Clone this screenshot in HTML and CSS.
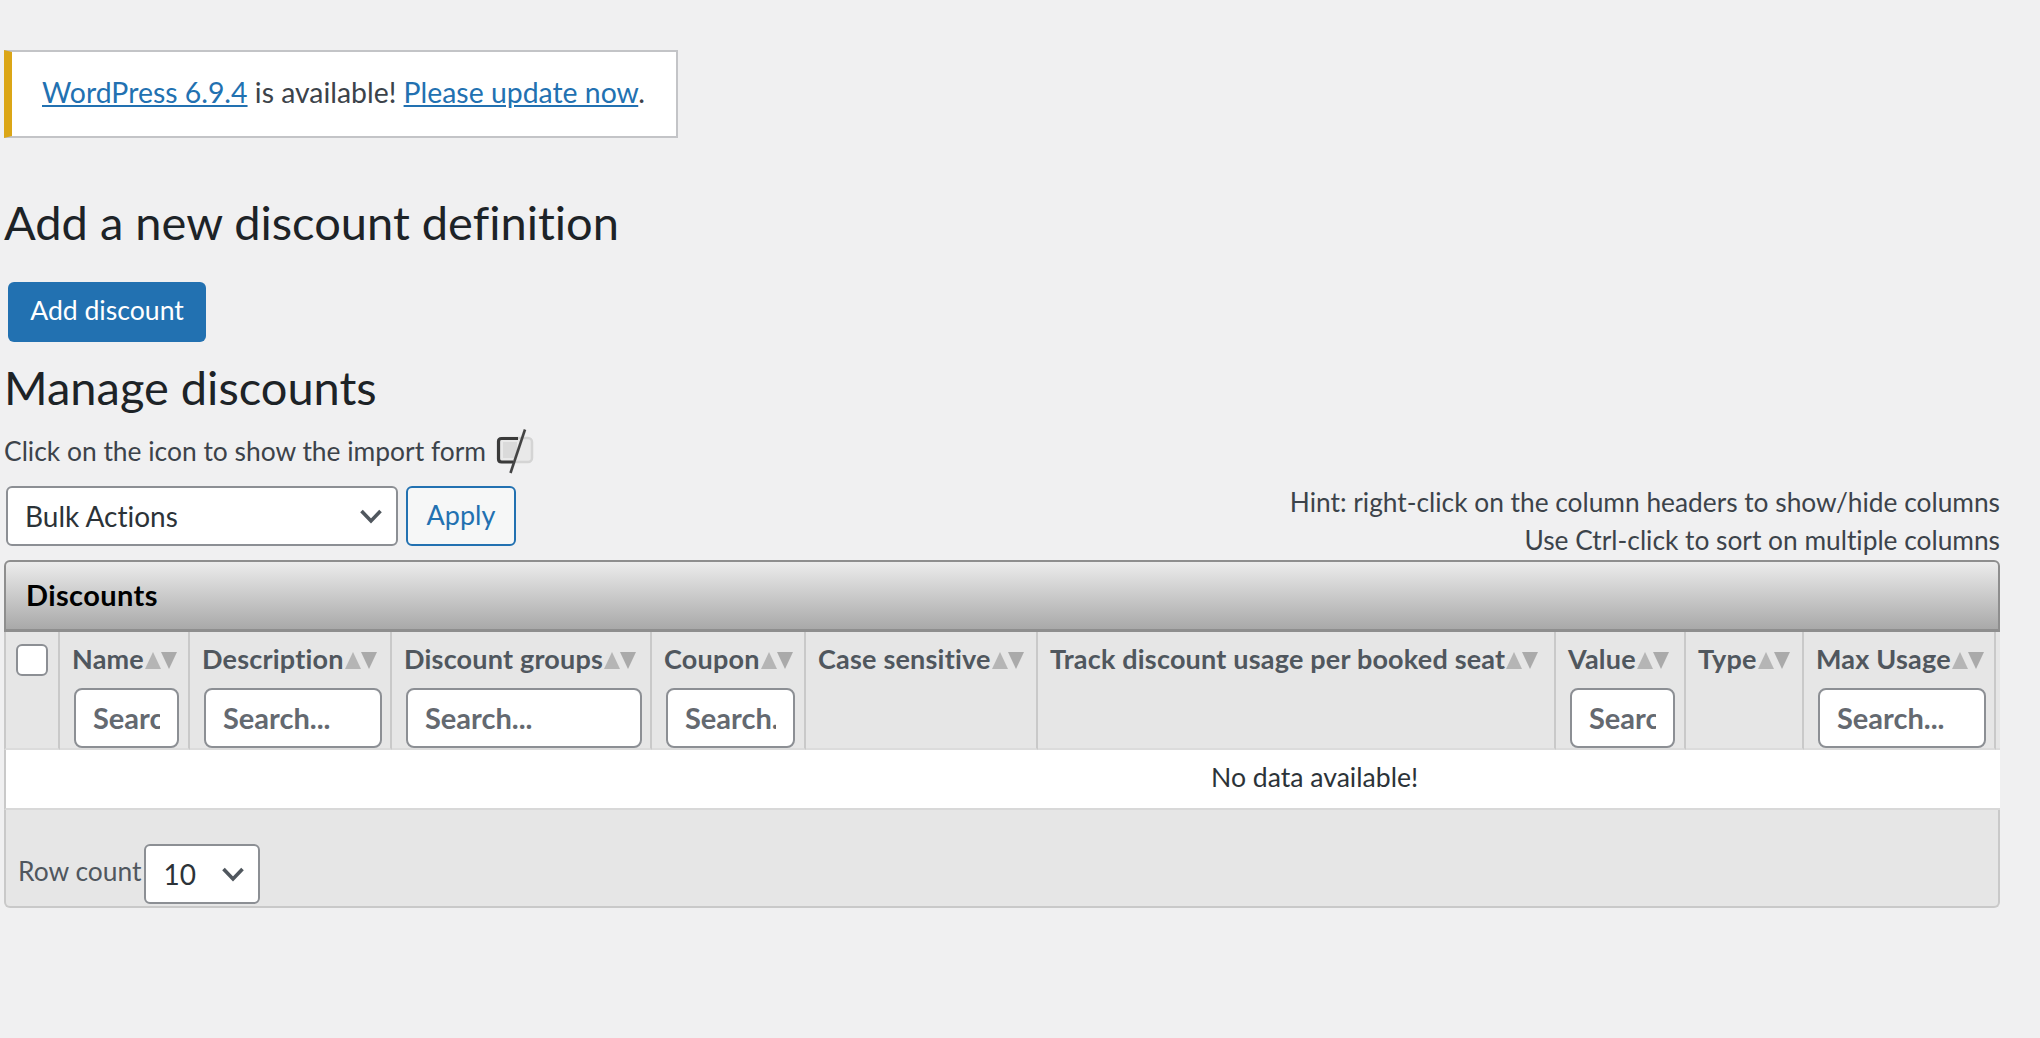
FILE: index.html
```html
<!DOCTYPE html>
<html lang="en">
<head>
<meta charset="utf-8">
<title>Discounts</title>
<link rel="stylesheet" href="styles.css">
</head>
<body>
<main class="wrap">
  <div class="notice"><p><a href="#">WordPress 6.9.4</a> is available! <a href="#">Please update now</a>.</p></div>
  <h2 class="title first">Add a new discount definition</h2>
  <div class="add-row"><button class="btn-primary" type="button">Add discount</button></div>
  <h2 class="title second">Manage discounts</h2>
  <div class="import-row">
    <span>Click on the icon to show the import form</span>
    <svg class="import-icon" width="42" height="46" viewBox="0 0 42 46" aria-hidden="true">
      <rect x="4" y="10" width="33" height="24" rx="4" fill="#e9e9e9" stroke="#d4d4d4" stroke-width="2.500"/>
      <rect x="8" y="14" width="14" height="16" fill="#dadada"/>
      <path d="M23 10.500H6.500Q3.500 10.500 3.500 13.500V31Q3.500 34 6.500 34H18" fill="none" stroke="#3a3a3a" stroke-width="3.200"/>
      <path d="M30 1.500L15.500 45" fill="none" stroke="#444" stroke-width="2.600"/>
    </svg>
  </div>
  <div class="tools">
    <div class="bulk">
      <div class="select bulk-select"><span>Bulk Actions</span><svg width="24" height="16" viewBox="0 0 24 16"><path d="M2.500 3L12 13L21.500 3" fill="none" stroke="#50575e" stroke-width="3.600"/></svg></div>
      <button class="btn-secondary" type="button">Apply</button>
    </div>
    <div class="hints">
      <div>Hint: right-click on the column headers to show/hide columns</div>
      <div>Use Ctrl-click to sort on multiple columns</div>
    </div>
  </div>
  <section class="grid">
    <div class="caption">Discounts</div>
    <div class="table-clip">
    <table>
      <colgroup>
        <col class="c1"><col class="c2"><col class="c3"><col class="c4"><col class="c5"><col class="c6"><col class="c7"><col class="c8"><col class="c9"><col class="c10"><col class="c11">
      </colgroup>
      <thead>
        <tr>
          <th><span class="check"></span></th>
          <th><div class="head"><span class="lbl">Name</span><i class="up"></i><i class="down"></i></div><input class="search s-name" placeholder="Search..."></th>
          <th><div class="head"><span class="lbl">Description</span><i class="up"></i><i class="down"></i></div><input class="search s-desc" placeholder="Search..."></th>
          <th><div class="head"><span class="lbl">Discount groups</span><i class="up"></i><i class="down"></i></div><input class="search s-group" placeholder="Search..."></th>
          <th><div class="head"><span class="lbl">Coupon</span><i class="up"></i><i class="down"></i></div><input class="search s-coupon" placeholder="Search..."></th>
          <th><div class="head"><span class="lbl">Case sensitive</span><i class="up"></i><i class="down"></i></div></th>
          <th><div class="head"><span class="lbl">Track discount usage per booked seat</span><i class="up"></i><i class="down"></i></div></th>
          <th><div class="head"><span class="lbl">Value</span><i class="up"></i><i class="down"></i></div><input class="search s-value" placeholder="Search..."></th>
          <th><div class="head"><span class="lbl">Type</span><i class="up"></i><i class="down"></i></div></th>
          <th><div class="head"><span class="lbl">Max Usage</span><i class="up"></i><i class="down"></i></div><input class="search s-max" placeholder="Search..."></th>
          <th class="last"></th>
        </tr>
      </thead>
      <tbody>
        <tr><td colspan="11" class="empty">No data available!</td></tr>
      </tbody>
    </table>
    </div>
    <div class="pager">
      <span class="row-label">Row count</span>
      <div class="select count-select"><span>10</span><svg width="24" height="16" viewBox="0 0 24 16"><path d="M2.500 3L12 13L21.500 3" fill="none" stroke="#50575e" stroke-width="3.600"/></svg></div>
    </div>
  </section>
</main>
</body>
</html>
```
FILE: styles.css
```css
* { box-sizing: border-box; }
html, body { margin: 0; padding: 0; }
body {
  background: #f0f0f1;
  color: #3c434a;
  font-family: "Lato", "Noto Sans", sans-serif;
  font-variant-ligatures: none;
  font-size: 26.3px;
  height: 1038px;
  overflow: hidden;
}
.wrap { width: 2000px; margin-left: 4px; padding-top: 50px; }
.notice {
  width: 674px;
  height: 88px;
  background: #fff;
  border: 2px solid #c3c4c7;
  border-left: 8px solid #dba617;
  padding: 0 0 5px 30px;
  display: flex;
  align-items: center;
}
.notice p { margin: 0; font-size: 28.4px; line-height: 40px; }
.notice a { color: #2271b1; text-decoration: underline; }
.title { margin: 0; font-weight: 400; color: #1d2327; font-size: 47px; line-height: 60px; }
.title.first { margin-top: 54px; }
.title.second { margin-top: 15px; }
.add-row { margin-top: 30px; padding-left: 4px; }
.btn-primary {
  width: 198px; height: 60px;
  background: #2271b1; color: #fff;
  border: 0; border-radius: 6px;
  padding: 0 0 5px;
  font: inherit; font-size: 26.6px;
}
.import-row { display: flex; align-items: center; height: 46px; margin-top: 11px; font-size: 26.4px; }
.import-icon { margin-left: 9px; flex: none; }
.tools { display: flex; justify-content: space-between; width: 1996px; margin-top: 4px; }
.bulk { display: flex; gap: 8px; padding-left: 2px; padding-top: 8px; }
.select {
  height: 60px;
  background: #fff;
  border: 2px solid #8c8f94;
  border-radius: 6px;
  color: #2c3338;
  font-size: 28px;
  display: flex;
  align-items: center;
  justify-content: space-between;
  padding: 0 13px 0 17px;
}
.bulk-select { width: 392px; }
.btn-secondary {
  width: 110px; height: 60px;
  background: #f6f7f7; color: #2271b1;
  border: 2px solid #2271b1; border-radius: 6px;
  padding: 0 0 3px;
  font: inherit; font-size: 27px;
}
.hints { text-align: right; line-height: 38px; color: #3c434a; padding-top: 5px; }
.grid { width: 1996px; margin-top: 1px; }
.caption {
  height: 72px;
  border: 2px solid #8e8e8e;
  border-bottom-width: 3px;
  border-radius: 6px 6px 0 0;
  background: linear-gradient(#ececec, #a9a9a9);
  color: #000;
  font-weight: 700;
  font-size: 29px;
  letter-spacing: .4px;
  line-height: 66px;
  padding-left: 20px;
}
.table-clip { overflow: hidden; }
table { width: 1996px; table-layout: fixed; border-collapse: separate; border-spacing: 0; }
.c1 { width: 56px; } .c2 { width: 130px; } .c3 { width: 202px; } .c4 { width: 260px; }
.c5 { width: 154px; } .c6 { width: 232px; } .c7 { width: 518px; } .c8 { width: 130px; }
.c9 { width: 118px; } .c10 { width: 192px; } .c11 { width: 4px; }
th {
  height: 118px;
  padding: 0;
  background: #e6e6e6;
  border-right: 2px solid #c9c9c9;
  border-bottom: 2px solid #dcdcdc;
  vertical-align: top;
  text-align: left;
  overflow: hidden;
}
th:first-child { border-left: 2px solid #c9c9c9; }
th.last { border-right: 0; }
.check {
  display: block;
  width: 32px; height: 32px;
  margin: 12px 0 0 10px;
  background: #fff;
  border: 2px solid #8c8f94;
  border-radius: 6px;
}
.head { display: flex; align-items: center; height: 56px; padding: 0 0 3px 12px; white-space: nowrap; }
.lbl { color: #50575e; font-size: 27px; letter-spacing: .2px; font-weight: 700; }
.up, .down { width: 0; height: 0; flex: none; border-left: 8px solid transparent; border-right: 8px solid transparent; margin-top: 3px; }
.up { border-bottom: 17px solid #b5b5b5; margin-left: 1px; }
.down { border-top: 17px solid #aaa; }
.search {
  display: block;
  height: 60px;
  background: #fff;
  border: 2px solid #8c8f94;
  border-radius: 8px;
  padding: 0 17px 2px;
  margin: 0;
  font: inherit;
  font-size: 29px;
  font-weight: 700;
}
.search::placeholder { color: #646970; opacity: 1; }
.s-name { width: 105px; margin-left: 14px; }
.s-desc { width: 178px; margin-left: 14px; }
.s-group { width: 236px; margin-left: 14px; }
.s-coupon { width: 129px; margin-left: 14px; }
.s-value { width: 105px; margin-left: 14px; }
.s-max { width: 168px; margin-left: 14px; }
.empty {
  height: 60px;
  background: #fff;
  color: #2c3338;
  font-size: 26.6px;
  padding: 0 0 5px 1205px;
  border-left: 2px solid #c9c9c9;
  border-bottom: 2px solid #d8d8d8;
}
.pager {
  height: 98px;
  background: #e6e6e6;
  border: 2px solid #c9c9c9;
  border-top: 0;
  border-radius: 0 0 6px 6px;
  display: flex;
  align-items: flex-start;
  padding: 34px 0 0 12px;
}
.row-label { color: #50575e; font-size: 26.4px; margin-top: 11px; margin-right: 3px; }
.count-select { width: 116px; }
```
